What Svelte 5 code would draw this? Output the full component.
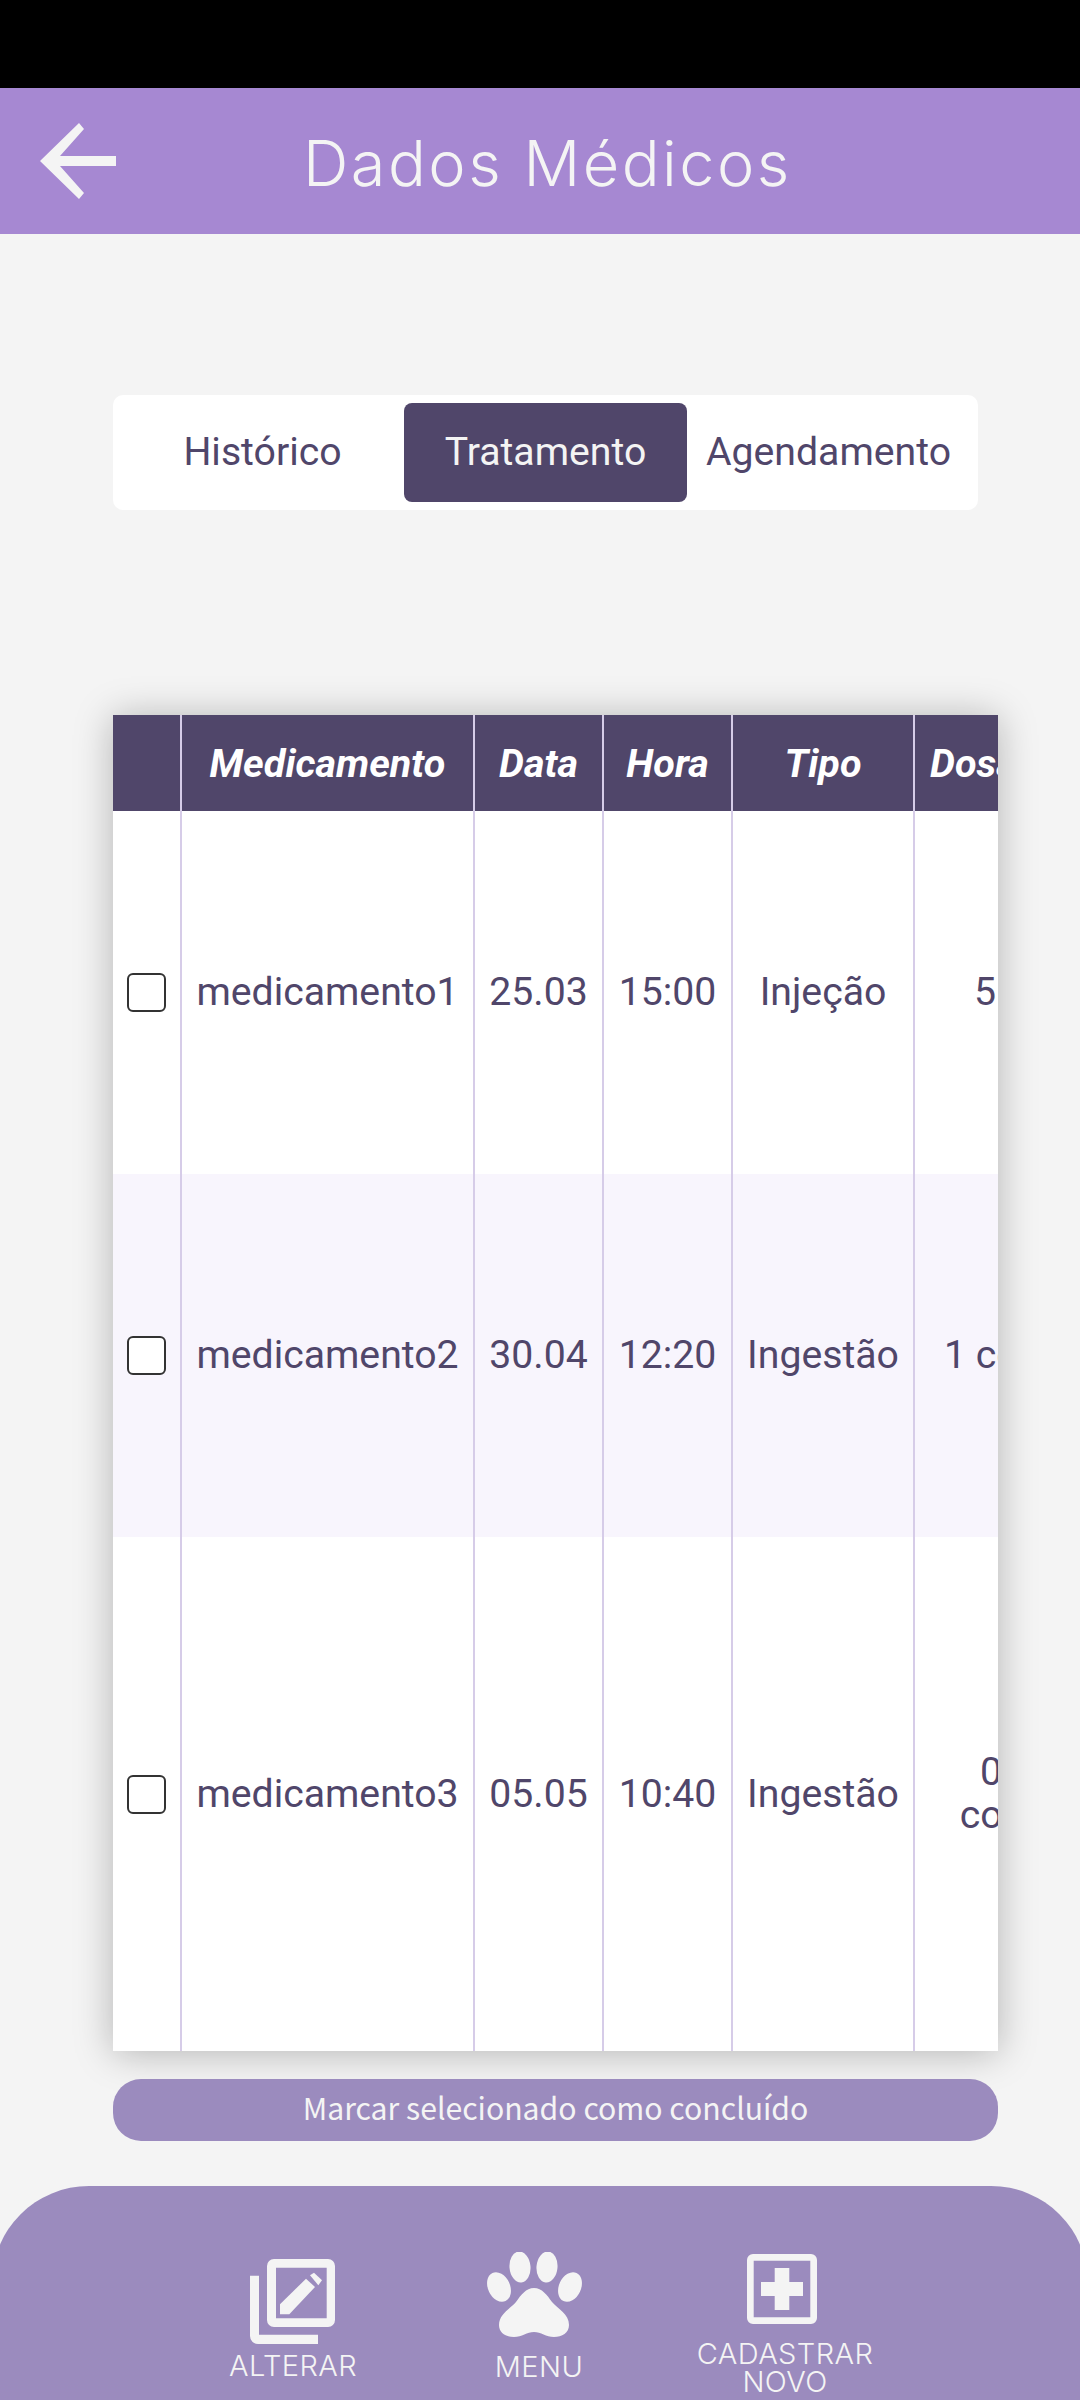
<script>
  const tabs = ["Histórico", "Tratamento", "Agendamento"];
  let activeTab = $state("Tratamento");

  const columns = ["", "Medicamento", "Data", "Hora", "Tipo", "Dosagem"];
  const rows = [
    { nome: "medicamento1", data: "25.03", hora: "15:00", tipo: "Injeção", dose: ["5 mililitros"], h: "first" },
    { nome: "medicamento2", data: "30.04", hora: "12:20", tipo: "Ingestão", dose: ["1 comprimido"], h: "second" },
    { nome: "medicamento3", data: "05.05", hora: "10:40", tipo: "Ingestão", dose: ["0,5 de um", "comprimido"], h: "third" },
  ];
</script>

<div class="page">
  <div class="statusbar"></div>

  <header class="topbar">
    <svg class="back" viewBox="0 0 76 76" aria-label="Voltar">
      <polygon points="39,0 44,6 20,33 76,33 76,43 20,43 44,70 39,76 0,38" />
    </svg>
    <h1>Dados Médicos</h1>
  </header>

  <nav class="tabs">
    {#each tabs as tab}
      <button class="tab" class:active={tab === activeTab} onclick={() => (activeTab = tab)}>{tab}</button>
    {/each}
  </nav>

  <div class="table-wrap">
    <table>
      <colgroup>
        <col class="c-check" />
        <col class="c-name" />
        <col class="c-short" />
        <col class="c-short" />
        <col class="c-type" />
        <col class="c-dose" />
      </colgroup>
      <thead>
        <tr>
          {#each columns as col}
            <th>{col}</th>
          {/each}
        </tr>
      </thead>
      <tbody>
        {#each rows as row}
          <tr class={row.h}>
            <td><input type="checkbox" /></td>
            <td>{row.nome}</td>
            <td>{row.data}</td>
            <td>{row.hora}</td>
            <td>{row.tipo}</td>
            <td>
              {#each row.dose as line}
                <div>{line}</div>
              {/each}
            </td>
          </tr>
        {/each}
      </tbody>
    </table>
  </div>

  <button class="done">Marcar selecionado como concluído</button>

  <footer class="bottombar">
    <div class="item alterar">
      <svg width="86" height="85" viewBox="0 0 86 85">
        <path
          fill-rule="evenodd"
          d="M24 0H78a7 7 0 0 1 7 7V61a7 7 0 0 1-7 7H24a7 7 0 0 1-7-7V7a7 7 0 0 1 7-7ZM26 8.700V59.300H76.700V8.700Z"
        />
        <path d="M0 16.700H9V75.700H68V85H8a8 8 0 0 1-8-8Z" />
        <polygon points="30,45.300 30,55.300 39.300,55.300 65,28 56,19.700" />
        <polygon points="60,16.300 64,13.700 72,21.300 68.300,26.300" />
      </svg>
      <span>ALTERAR</span>
    </div>

    <div class="item menu">
      <svg width="96" height="86" viewBox="0 0 96 86">
        <ellipse cx="12" cy="35" rx="11" ry="15.500" transform="rotate(-25 12 35)" />
        <ellipse cx="33" cy="15" rx="10.500" ry="15.500" transform="rotate(-5 33 15)" />
        <ellipse cx="60" cy="15" rx="10.500" ry="15.500" transform="rotate(5 60 15)" />
        <ellipse cx="83" cy="35" rx="11" ry="15.500" transform="rotate(25 83 35)" />
        <path d="M47 36C55 36 60 43 65 50C71 57 82 62 82 73C82 81 75 85 67 85C59 85 54 80 47 80C40 80 35 85 27 85C19 85 12 81 12 73C12 62 23 57 29 50C34 43 39 36 47 36Z" />
      </svg>
      <span>MENU</span>
    </div>

    <div class="item cadastrar">
      <svg width="70" height="70" viewBox="0 0 70 70">
        <path
          fill-rule="evenodd"
          d="M6 0H64a6 6 0 0 1 6 6V64a6 6 0 0 1-6 6H6a6 6 0 0 1-6-6V6a6 6 0 0 1 6-6ZM6.700 6.700V63.300H63.300V6.700Z"
        />
        <polygon points="27.700,14 42.300,14 42.300,28 56,28 56,42 42.300,42 42.300,56 27.700,56 27.700,42 14,42 14,28 27.700,28" />
      </svg>
      <span>CADASTRAR<br />NOVO</span>
    </div>
  </footer>
</div>

<style>
  :global(body) {
    background: #f4f4f4;
  }

  .page {
    width: 1080px;
    height: 2400px;
    overflow: hidden;
    background: #f4f4f4;
    font-family: Roboto, sans-serif;
    color: #50466a;
  }

  .statusbar {
    height: 88px;
    background: #000;
  }

  .topbar {
    height: 146px;
    background: #a688d2;
    display: flex;
    align-items: center;
    padding-left: 40px;
  }

  .back {
    width: 76px;
    height: 76px;
    fill: #f4f4f4;
    flex: none;
  }

  h1 {
    margin: 3px 0 0 187px;
    font-family: Inter, sans-serif;
    font-weight: 300;
    font-size: 63px;
    letter-spacing: 2.500px;
    color: #f4f4f4;
    white-space: nowrap;
  }

  .tabs {
    display: flex;
    width: 849px;
    margin: 161px 0 0 113px;
    padding: 8px;
    background: #fff;
    border-radius: 10px;
  }

  .tab {
    flex: 1;
    height: 99px;
    border: 0;
    padding: 0 0 2px;
    background: none;
    border-radius: 8px;
    font-family: Roboto, sans-serif;
    font-size: 39.200px;
    color: #50466a;
  }

  .tab.active {
    background: #50466a;
    color: #f4f4f4;
  }

  .table-wrap {
    width: 885px;
    height: 1336px;
    margin: 205px 0 0 113px;
    overflow: hidden;
    background: #fff;
    box-shadow: 0 2px 36px rgba(0, 0, 0, 0.27);
  }

  table {
    width: 1102px;
    table-layout: fixed;
    border-collapse: separate;
    border-spacing: 0;
    font-size: 39.200px;
    line-height: 43px;
  }

  .c-check { width: 69px; }
  .c-name { width: 293px; }
  .c-short { width: 129px; }
  .c-type { width: 182px; }
  .c-dose { width: 300px; }

  th {
    height: 96px;
    padding: 0;
    background: #50466a;
    color: #fff;
    font-style: italic;
    font-weight: 700;
    font-size: 39.500px;
    border-right: 2px solid #d6cce8;
  }

  th:last-child {
    text-align: left;
    padding-left: 15px;
    border-right: 0;
  }

  td {
    padding: 0;
    text-align: center;
    white-space: nowrap;
    border-right: 2px solid #d6cce8;
  }

  td:last-child {
    border-right: 0;
  }

  tr.first { height: 363px; }
  tr.second { height: 363px; background: #f8f5fd; }
  tr.third { height: 514px; }

  input[type="checkbox"] {
    appearance: none;
    display: block;
    width: 39px;
    height: 39px;
    margin: 0 0 0 14px;
    background: #fff;
    border: 2.500px solid #333;
    border-radius: 6px;
    box-sizing: border-box;
  }

  .done {
    display: block;
    width: 885px;
    height: 62px;
    margin: 28px 0 0 113px;
    padding: 0 0 6px;
    border: 0;
    border-radius: 28px;
    background: #9b8bbe;
    color: #f4f4f4;
    font-family: "Noto Sans CJK SC", sans-serif;
    font-size: 30.200px;
  }

  .bottombar {
    height: 214px;
    margin: 45px -8px 0;
    padding-left: 178px;
    background: #9b8bbe;
    border-radius: 97px 97px 0 0;
    display: flex;
    color: #f4f4f4;
  }

  .item {
    width: 246px;
    display: flex;
    flex-direction: column;
    align-items: center;
    flex: none;
  }

  .item svg {
    fill: #f4f4f4;
    flex: none;
  }

  .item span {
    font-family: Inter, sans-serif;
    font-weight: 300;
    font-size: 29px;
    letter-spacing: 0.400px;
    line-height: 28px;
    text-align: center;
    white-space: nowrap;
  }

  .alterar { padding-top: 73px; }
  .alterar span { margin-top: 8px; }
  .menu { padding-top: 66px; }
  .menu svg { margin-right: 8px; }
  .menu span { margin-top: 15px; }
  .cadastrar { padding-top: 68px; }
  .cadastrar svg { margin-right: 6px; }
  .cadastrar span { margin-top: 16px; }
</style>
